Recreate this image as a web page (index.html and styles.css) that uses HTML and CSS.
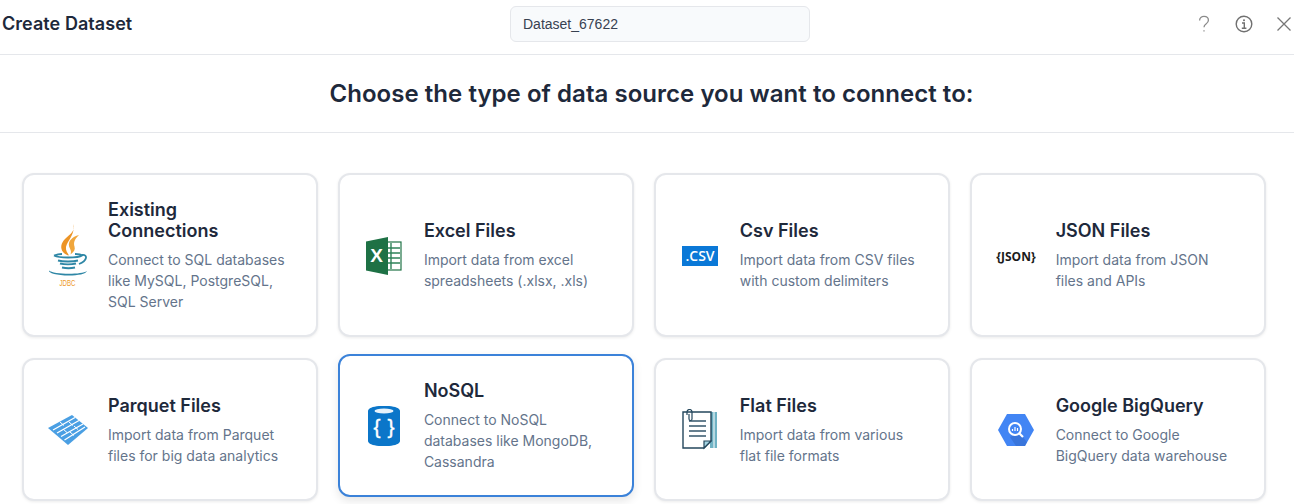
FILE: index.html
```html
<!DOCTYPE html>
<html lang="en">
<head>
<meta charset="utf-8">
<title>Create Dataset</title>
<link rel="stylesheet" href="styles.css">
</head>
<body>
<header class="topbar">
  <h1 class="topbar-title">Create Dataset</h1>
  <div class="name-field">Dataset_67622</div>
  <div class="topbar-actions">
    <svg class="action" viewBox="0 0 20 20" width="20" height="20"><path d="M5.600 6.600c0-2.600 2-4.200 4.400-4.200s4.400 1.500 4.400 3.900c0 1.900-1.100 2.800-2.400 3.700-1.300.9-2 1.600-2 3.300" fill="none" stroke="#8a8a8a" stroke-width="1.300"/><circle cx="10" cy="16.800" r=".9" fill="#b0b0b0"/></svg>
    <svg class="action" viewBox="0 0 20 20" width="20" height="20"><circle cx="10" cy="10" r="7.800" fill="none" stroke="#707070" stroke-width="1.400"/><circle cx="10" cy="6.300" r="1" fill="#707070"/><path d="M8 9h2.300v5M7.800 14.200h4.600" fill="none" stroke="#707070" stroke-width="1.400"/></svg>
    <svg class="action" viewBox="0 0 20 20" width="20" height="20"><path d="M3.500 3.500l13 13M16.500 3.500l-13 13" fill="none" stroke="#777" stroke-width="1.300"/></svg>
  </div>
</header>
<section class="prompt"><h2>Choose the type of data source you want to connect to:</h2></section>
<main class="cards">
  <article class="card">
    <div class="card-icon">
      <svg viewBox="0 0 42 63" width="42" height="63">
        <path d="M26 0c3 7-3 10-8 15-4 4-5 9-2 13 1.500 2 3.500 3 6 3.500-1.500-2.500-3.500-5-3-8.500C20 17 29 10 26 0z" fill="#ec9426"/>
        <path d="M32 11c-7 2-11 6-10 11 .5 2.500 3 4.500 1.500 8.500 3.500-2.500 5-5 4-8-1-3.500-.5-7 4.500-11.500z" fill="#f0a63c"/>
        <path d="M7 31.500c4-1.500 8-1.500 8-1.500M28 30c4 0 6 .5 7 1.500-2 1.500-7 2-14 2s-11-.5-14-2" fill="none" stroke="#2f87a6" stroke-width="1.800"/>
        <path d="M11 36.500c5 1.200 15 1.200 20 0M13 39.500c4 1 12 1 16 0M15 43.500c4 .8 9 .8 13 0" fill="none" stroke="#2f87a6" stroke-width="2"/>
        <path d="M35 31c6-1 5.500 6-3 9" fill="none" stroke="#2f87a6" stroke-width="1.800"/>
        <path d="M2 46.500c-1 2.500 8 5 20 5 9 0 17-1.500 18-4.500-3 1.800-10 2.800-18 2.800-9 0-18-1.300-20-3.300z" fill="#2f87a6"/>
        <text x="20.500" y="61.500" class="jdbc" textLength="16" lengthAdjust="spacingAndGlyphs">JDBC</text>
      </svg>
    </div>
    <div class="card-text">
      <h3>Existing Connections</h3>
      <p>Connect to SQL databases like MySQL, PostgreSQL, SQL Server</p>
    </div>
  </article>
  <article class="card">
    <div class="card-icon">
      <svg viewBox="0 0 36 38" width="36" height="38">
        <rect x="16" y="5" width="19" height="28" fill="#fff" stroke="#217346" stroke-width="1.200"/>
        <path d="M25 6v26M21 6v26M17 11h17M17 16h17M17 21h17M17 26h17" stroke="#2f8259" stroke-width="1.400"/>
        <path d="M0 4.500L22 0v38L0 33.500z" fill="#1e7145"/>
        <text x="10.500" y="25" class="xl">X</text>
      </svg>
    </div>
    <div class="card-text">
      <h3>Excel Files</h3>
      <p>Import data from excel spreadsheets (.xlsx, .xls)</p>
    </div>
  </article>
  <article class="card">
    <div class="card-icon">
      <svg viewBox="0 0 36 20" width="36" height="20">
        <rect width="36" height="20" fill="#0a78d7"/>
        <text x="18" y="15" class="csv">.CSV</text>
      </svg>
    </div>
    <div class="card-text">
      <h3>Csv Files</h3>
      <p>Import data from CSV files with custom delimiters</p>
    </div>
  </article>
  <article class="card">
    <div class="card-icon">
      <svg viewBox="0 0 40 16" width="40" height="16">
        <text x="20" y="12.500" class="json">{JSON}</text>
      </svg>
    </div>
    <div class="card-text">
      <h3>JSON Files</h3>
      <p>Import data from JSON files and APIs</p>
    </div>
  </article>
  <article class="card">
    <div class="card-icon">
      <svg viewBox="0 0 40 32" width="40" height="32">
        <path d="M0 14L24 1l16 13-20 17z" fill="#4a9fe3"/>
        <path d="M5 16L27 3.500M9 19L31 6.500M13 22.500L35 10M16.500 26L37 13" stroke="#fff" stroke-width="1.300" fill="none"/>
        <path d="M12 8l4 3.500M21 8l4 3.500M15 15l4 3.500M26 12l4 3.500M22 18l4 3.500" stroke="#fff" stroke-width="1"/>
      </svg>
    </div>
    <div class="card-text">
      <h3>Parquet Files</h3>
      <p>Import data from Parquet files for big data analytics</p>
    </div>
  </article>
  <article class="card card-selected">
    <div class="card-icon">
      <svg viewBox="0 0 32 40" width="32" height="40">
        <path d="M0 5c0-7 32-7 32 0v30c0 7-32 7-32 0z" fill="#0b76c9"/>
        <ellipse cx="16" cy="5" rx="9.500" ry="2.500" fill="#e8f3fb"/>
        <text x="9" y="28" class="brace">{</text>
        <text x="23" y="28" class="brace">}</text>
      </svg>
    </div>
    <div class="card-text">
      <h3>NoSQL</h3>
      <p>Connect to NoSQL databases like MongoDB, Cassandra</p>
    </div>
  </article>
  <article class="card">
    <div class="card-icon">
      <svg viewBox="0 0 38 42" width="38" height="42">
        <rect x="29" y="3" width="7" height="36" fill="#6fb2c4"/>
        <path d="M33 3v36" stroke="#fff" stroke-width="1"/>
        <path d="M2 3h28v29l-7 7H2z" fill="#fff" stroke="#24475c" stroke-width="1.400"/>
        <path d="M23 39v-7h7l-7 7z" fill="#a5d4e2" stroke="#24475c" stroke-width="1.200"/>
        <path d="M8 12h17M8 17h17M8 22h17M8 27h17" stroke="#35566b" stroke-width="1.500"/>
        <path d="M6 6V3a2.500 2.500 0 0 1 5 0v7a1.500 1.500 0 0 1-3 0V5" fill="none" stroke="#24475c" stroke-width="1.200"/>
      </svg>
    </div>
    <div class="card-text">
      <h3>Flat Files</h3>
      <p>Import data from various flat file formats</p>
    </div>
  </article>
  <article class="card">
    <div class="card-icon">
      <svg viewBox="0 0 36 32" width="36" height="32">
        <path d="M9 0h18l9 16-9 16H9L0 16z" fill="#4285f4"/>
        <path d="M21 19l8 9-2 4h-9l-6-9z" fill="#3367c7" opacity=".55"/>
        <circle cx="17" cy="15" r="6" fill="#4285f4" stroke="#fff" stroke-width="2"/>
        <path d="M14.500 17v-2M17 17v-4M19.500 17v-3" stroke="#fff" stroke-width="1.200"/>
        <path d="M21.500 19.500l3.500 3.500" stroke="#fff" stroke-width="2.200"/>
      </svg>
    </div>
    <div class="card-text">
      <h3>Google BigQuery</h3>
      <p>Connect to Google BigQuery data warehouse</p>
    </div>
  </article>
</main>
</body>
</html>
```
FILE: styles.css
```css
* {
  box-sizing: border-box;
}

html,
body {
  height: 504px;
  margin: 0;
  overflow: hidden;
  background: #fff;
  font-family: Inter, "Liberation Sans", sans-serif;
  color: #1e293b;
}

.topbar {
  height: 55px;
  display: grid;
  grid-template-columns: 508px 300px 1fr;
  align-items: center;
  padding: 0 0 6px 2px;
  border-bottom: 1px solid #e5e7eb;
}

.topbar-title {
  margin: 0;
  font-size: 18px;
  line-height: 24px;
  font-weight: 600;
  letter-spacing: .05px;
}

.name-field {
  height: 36px;
  padding: 0 12px;
  display: flex;
  align-items: center;
  background: #f8fafc;
  border: 1px solid #e5e7eb;
  border-radius: 6px;
  font-family: "Liberation Sans", Arial, sans-serif;
  font-size: 14px;
  color: #374151;
}

.topbar-actions {
  display: flex;
  justify-content: flex-end;
  gap: 20px;
}

.prompt {
  height: 78px;
  display: flex;
  align-items: center;
  justify-content: center;
  padding-left: 9px;
  border-bottom: 1px solid #e5e7eb;
}

.prompt h2 {
  margin: 0;
  font-size: 24px;
  line-height: 32px;
  font-weight: 600;
  letter-spacing: .04px;
}

.cards {
  display: grid;
  grid-template-columns: repeat(4, 1fr);
  gap: 21px 20px;
  padding: 40px 28.5px 0 22px;
}

.card {
  display: flex;
  align-items: center;
  gap: 16px;
  padding: 24px 28px 23px 20px;
  background: #fff;
  border: 2px solid #e5e7eb;
  border-radius: 12px;
  box-shadow: 0 1px 3px rgba(0, 0, 0, .08);
}

.card-selected {
  border-color: #3b82d9;
  transform: translateY(-4px);
  box-shadow: 0 4px 10px rgba(0, 0, 0, .1);
}

.card-icon {
  flex: 0 0 48px;
  height: 63px;
  display: flex;
  align-items: center;
  justify-content: center;
}

.card-text h3 {
  margin: 0 0 8px;
  font-size: 18px;
  line-height: 21px;
  font-weight: 600;
}

.card-text p {
  margin: 0;
  font-size: 14px;
  line-height: 21px;
  color: #64748b;
}

.jdbc {
  font: 8.500px "Liberation Sans", sans-serif;
  fill: #ee9a2c;
  text-anchor: middle;
}

.xl {
  font: 700 19px "Liberation Sans", sans-serif;
  fill: #fff;
  text-anchor: middle;
}

.csv {
  font: 600 14px "Open Sans", sans-serif;
  fill: #fff;
  text-anchor: middle;
}

.json {
  font: 700 12px "Open Sans", sans-serif;
  fill: #1a1a1a;
  text-anchor: middle;
}

.brace {
  font: 400 21px "Liberation Sans", sans-serif;
  fill: #fff;
  stroke: #fff;
  stroke-width: .4;
  text-anchor: middle;
}
```
